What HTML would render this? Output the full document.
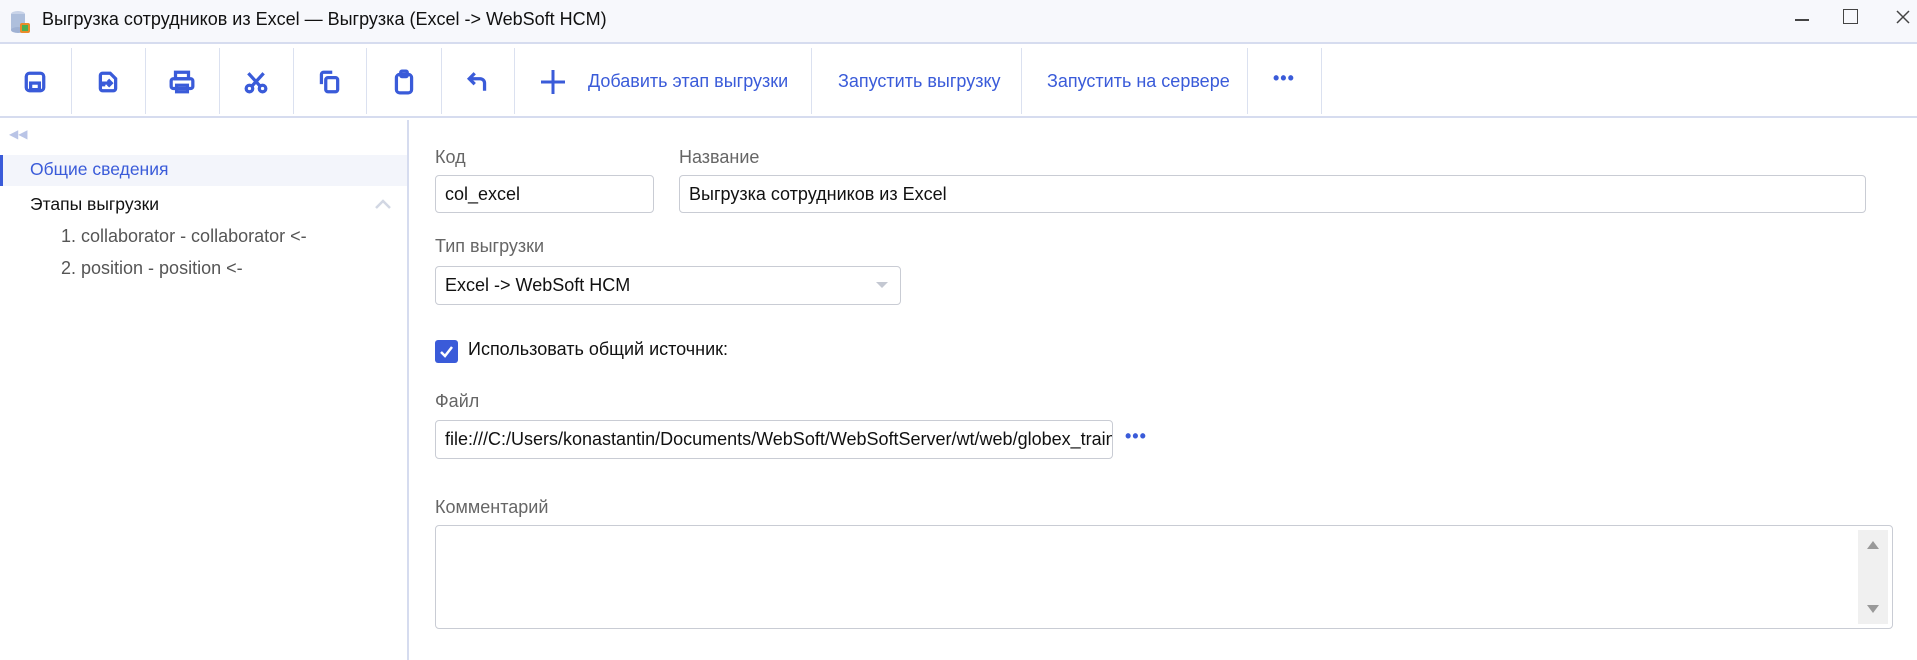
<!DOCTYPE html><html><head><meta charset="utf-8"><style>
*{box-sizing:border-box;margin:0;padding:0}
body{width:1917px;height:660px;overflow:hidden;background:#fff;font-family:"Segoe UI","Liberation Sans",sans-serif;font-size:18px;color:#222;position:relative}
.a{position:absolute}
.tb{left:0;top:0;width:1917px;height:44px;background:#f7f8fc;border-bottom:2px solid #d6dcef}
.tool{left:0;top:44px;width:1917px;height:74px;border-bottom:2px solid #d6dcef}
.sep{top:48px;width:1px;height:66px;background:#dbe1f0}
.btxt{top:71px;color:#3a5bd9;font-size:18px}
.lbl{color:#666;font-size:18px}
.inp{border:1.5px solid #c9ccd4;border-radius:4px;background:#fff;padding-left:9px;font-size:18px;color:#111;display:flex;align-items:center;white-space:nowrap;overflow:hidden}
svg{position:absolute}
</style></head><body>
<div class="a tb"></div>
<svg style="left:8px;top:9px" width="24" height="26" viewBox="0 0 24 26"><ellipse cx="10" cy="5" rx="7" ry="3" fill="#c8d3e8"/><rect x="3" y="5" width="14" height="16" fill="#aebfdc"/><ellipse cx="10" cy="21" rx="7" ry="3" fill="#9fb1d3"/><rect x="12" y="14" width="10" height="10" rx="2" fill="#e98b2a"/><rect x="14" y="16" width="6" height="6" fill="#4caf50"/></svg>
<div class="a" style="left:42px;top:9px;font-size:18px;color:#111">Выгрузка сотрудников из Excel — Выгрузка (Excel -&gt; WebSoft HCM)</div>
<div class="a" style="left:1795px;top:19px;width:14px;height:1.5px;background:#444"></div>
<div class="a" style="left:1843px;top:9px;width:15px;height:15px;border:1.5px solid #444"></div>
<svg style="left:1895px;top:9px" width="16" height="16"><path d="M2 2L14 14M14 2L2 14" stroke="#444" stroke-width="1.5"/></svg>
<div class="a tool"></div>
<div class="a sep" style="left:71px"></div><div class="a sep" style="left:145px"></div><div class="a sep" style="left:219px"></div><div class="a sep" style="left:293px"></div><div class="a sep" style="left:366px"></div><div class="a sep" style="left:441px"></div><div class="a sep" style="left:514px"></div><div class="a sep" style="left:811px"></div><div class="a sep" style="left:1021px"></div><div class="a sep" style="left:1247px"></div><div class="a sep" style="left:1321px"></div>
<svg style="left:23px;top:70px" width="24" height="24" viewBox="0 0 22 22" fill="none" stroke="#3a5bd9" stroke-width="3"><rect x="3" y="3" width="16" height="16" rx="3"/><rect x="7" y="12" width="8" height="6"/></svg>
<svg style="left:96px;top:70px" width="24" height="24" viewBox="0 0 22 22" fill="none" stroke="#3a5bd9" stroke-width="3"><path d="M4 5a2 2 0 0 1 2-2h7l5 5v9a2 2 0 0 1-2 2H6a2 2 0 0 1-2-2z"/><path d="M7 15v-3h7M11 9l3 3-3 3"/></svg>
<svg style="left:169px;top:70px" width="26" height="24" viewBox="0 0 24 22" fill="none" stroke="#3a5bd9" stroke-width="3"><rect x="6" y="2" width="12" height="6"/><rect x="2" y="8" width="20" height="9" rx="2"/><rect x="7" y="14" width="10" height="6"/></svg>
<svg style="left:244px;top:70px" width="24" height="24" viewBox="0 0 22 22" fill="none" stroke="#3a5bd9" stroke-width="3"><circle cx="5" cy="17" r="3"/><circle cx="17" cy="17" r="3"/><path d="M7 15L18 3M15 15L4 3"/></svg>
<svg style="left:317px;top:69px" width="24" height="26" viewBox="0 0 22 24" fill="none" stroke="#3a5bd9" stroke-width="3"><path d="M4 14V5a2 2 0 0 1 2-2h8"/><rect x="8" y="8" width="11" height="13" rx="2"/></svg>
<svg style="left:392px;top:69px" width="24" height="26" viewBox="0 0 22 24" fill="none" stroke="#3a5bd9" stroke-width="3"><rect x="4" y="5" width="14" height="17" rx="3"/><rect x="8" y="2" width="6" height="5" rx="1"/></svg>
<svg style="left:466px;top:70px" width="24" height="24" viewBox="0 0 22 22" fill="none" stroke="#3a5bd9" stroke-width="3"><path d="M8 3L3 8l5 5M3 8h10a4 4 0 0 1 4 4v7"/></svg>
<svg style="left:539px;top:68px" width="28" height="28" viewBox="0 0 28 28" stroke="#3a5bd9" stroke-width="3"><path d="M14 2v24M2 14h24"/></svg>
<div class="a btxt" style="left:588px">Добавить этап выгрузки</div>
<div class="a btxt" style="left:838px">Запустить выгрузку</div>
<div class="a btxt" style="left:1047px">Запустить на сервере</div>
<div class="a btxt" style="left:1273px;top:68px;font-weight:bold;letter-spacing:1px">•••</div>
<div class="a" style="left:407px;top:120px;width:2px;height:540px;background:#d6dcef"></div>
<div class="a" style="left:9px;top:127px;color:#b9c4e6;font-size:12px">◀◀</div>
<div class="a" style="left:0;top:155px;width:407px;height:31px;background:#f3f5fb;border-left:3px solid #3a5bd9"></div>
<div class="a" style="left:30px;top:159px;color:#3a5bd9;font-size:17.5px">Общие сведения</div>
<div class="a" style="left:30px;top:194px;color:#111;font-size:17.5px">Этапы выгрузки</div>
<svg style="left:374px;top:198px" width="18" height="12"><path d="M2 10L9 3l7 7" stroke="#d2d7e3" stroke-width="2.5" fill="none"/></svg>
<div class="a" style="left:61px;top:226px;color:#555">1. collaborator - collaborator &lt;-</div>
<div class="a" style="left:61px;top:258px;color:#555">2. position - position &lt;-</div>
<div class="a lbl" style="left:435px;top:147px">Код</div>
<div class="a inp" style="left:435px;top:175px;width:219px;height:38px">col_excel</div>
<div class="a lbl" style="left:679px;top:147px">Название</div>
<div class="a inp" style="left:679px;top:175px;width:1187px;height:38px">Выгрузка сотрудников из Excel</div>
<div class="a lbl" style="left:435px;top:236px">Тип выгрузки</div>
<div class="a inp" style="left:435px;top:266px;width:466px;height:39px">Excel -&gt; WebSoft HCM</div>
<div class="a" style="left:876px;top:282px;border-left:6px solid transparent;border-right:6px solid transparent;border-top:6px solid #c4c8d2"></div>
<div class="a" style="left:435px;top:340px;width:23px;height:23px;background:#3a5bd9;border-radius:3px"></div>
<svg style="left:438px;top:343px" width="17" height="17"><path d="M3 9l4 4 7-9" stroke="#fff" stroke-width="2.5" fill="none"/></svg>
<div class="a" style="left:468px;top:339px;color:#111">Использовать общий источник:</div>
<div class="a lbl" style="left:435px;top:391px">Файл</div>
<div class="a inp" style="left:435px;top:420px;width:678px;height:39px">file:///C:/Users/konastantin/Documents/WebSoft/WebSoftServer/wt/web/globex_training</div>
<div class="a" style="left:1125px;top:426px;color:#3a5bd9;font-weight:bold;letter-spacing:1px">•••</div>
<div class="a lbl" style="left:435px;top:497px">Комментарий</div>
<div class="a inp" style="left:435px;top:525px;width:1458px;height:104px"></div>
<div class="a" style="left:1858px;top:530px;width:30px;height:94px;background:#f0f0f0"></div>
<div class="a" style="left:1867px;top:541px;border-left:6px solid transparent;border-right:6px solid transparent;border-bottom:8px solid #999"></div>
<div class="a" style="left:1867px;top:605px;border-left:6px solid transparent;border-right:6px solid transparent;border-top:8px solid #999"></div>
</body></html>
